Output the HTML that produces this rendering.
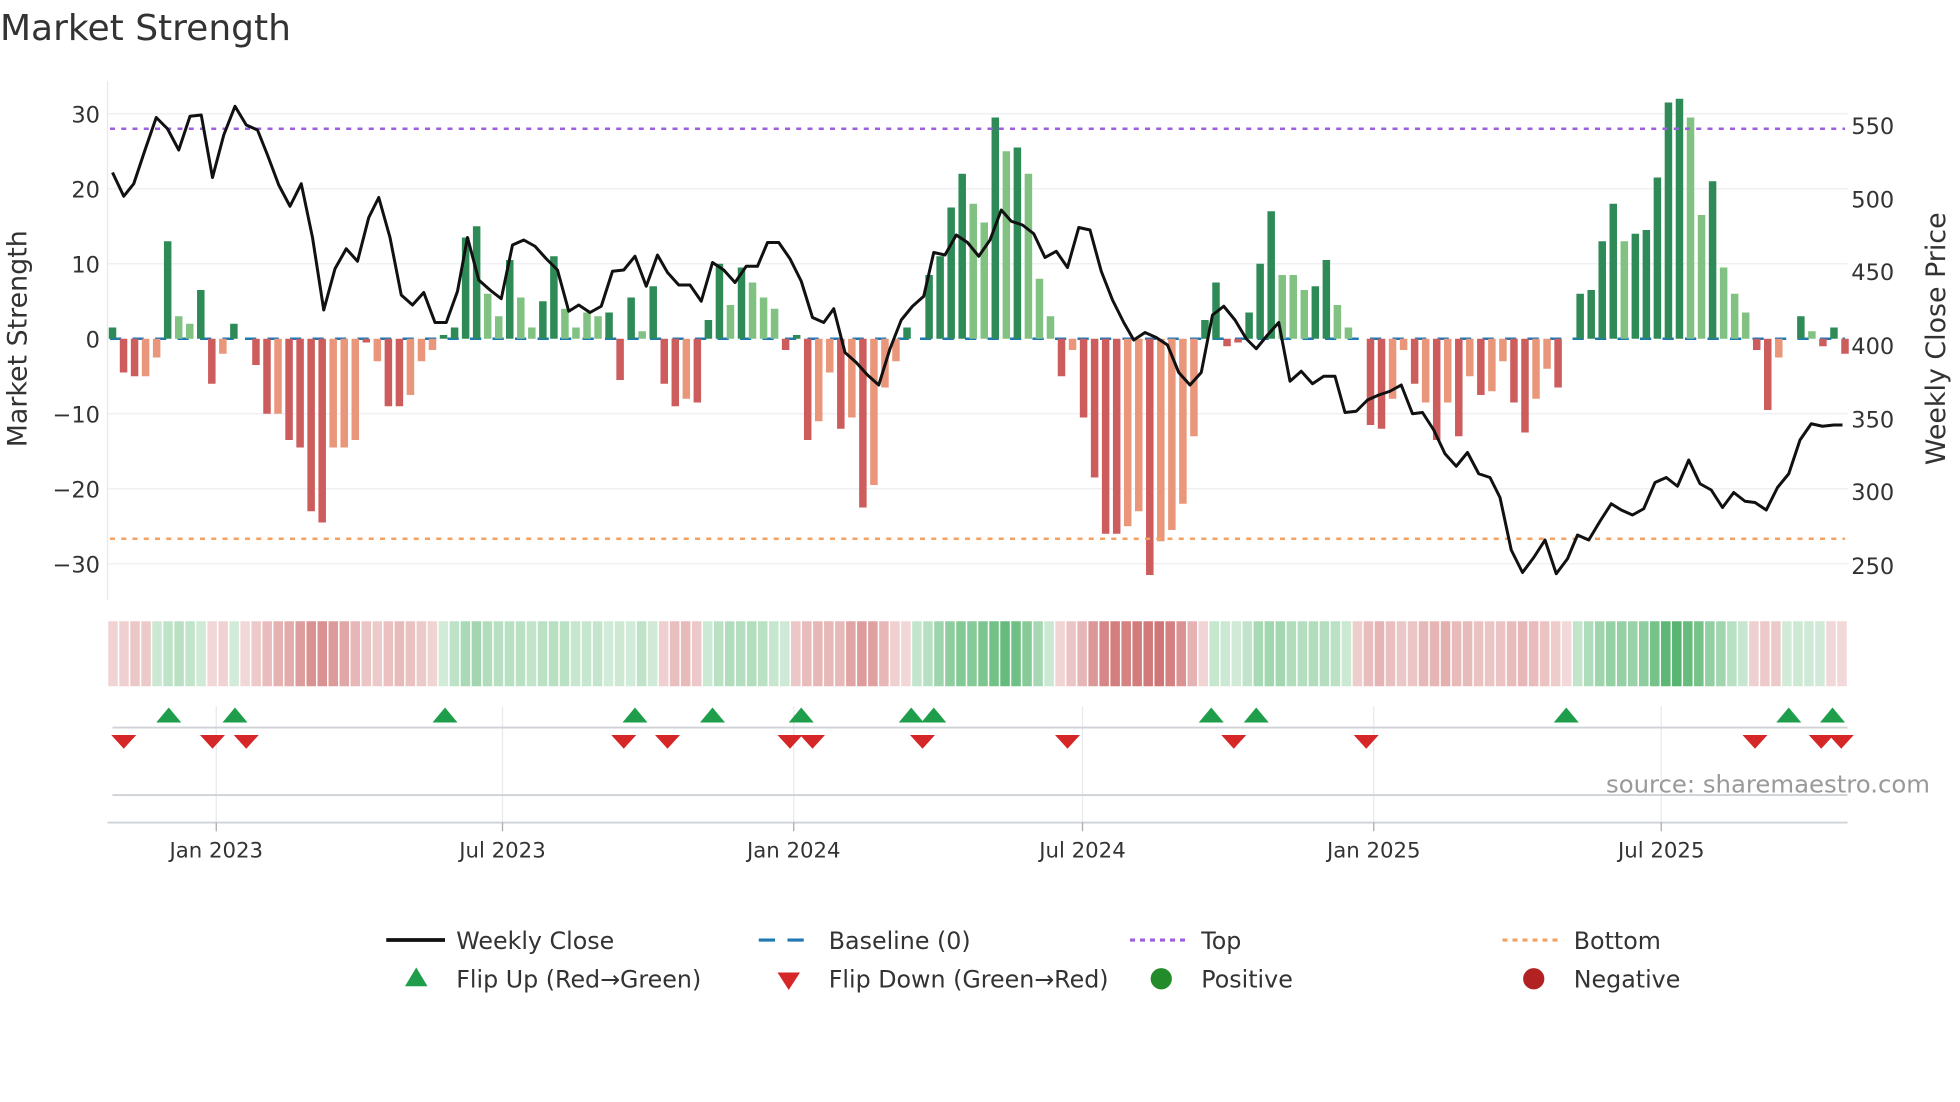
<!DOCTYPE html>
<html><head><meta charset="utf-8"><style>
html,body{margin:0;padding:0;background:#fff;width:1960px;height:1102px;overflow:hidden}
svg{display:block}
text{font-family:"DejaVu Sans","Liberation Sans",sans-serif;fill:#333}
</style></head><body>
<svg id="s" width="1960" height="1102" viewBox="0 0 1568 881.6" xmlns="http://www.w3.org/2000/svg">
<text x="0" y="32" font-size="28.8">Market Strength</text>
<g stroke="#eef0f3" stroke-width="1.2">
<line x1="86" x2="1478" y1="91" y2="91"/><line x1="86" x2="1478" y1="151" y2="151"/><line x1="86" x2="1478" y1="211" y2="211"/>
<line x1="86" x2="1478" y1="331" y2="331"/><line x1="86" x2="1478" y1="391" y2="391"/><line x1="86" x2="1478" y1="451" y2="451"/>
</g>
<line x1="86" x2="86" y1="65" y2="480" stroke="#e6e8ec"/>
<g font-size="18" text-anchor="end">
<text x="80" y="98">30</text><text x="80" y="158">20</text><text x="80" y="218">10</text><text x="80" y="278">0</text>
<text x="80" y="338">−10</text><text x="80" y="398">−20</text><text x="80" y="458">−30</text></g>
<g font-size="18">
<text x="1481" y="107">550</text><text x="1481" y="166">500</text><text x="1481" y="224">450</text><text x="1481" y="283">400</text>
<text x="1481" y="342">350</text><text x="1481" y="400">300</text><text x="1481" y="459">250</text></g>
<text font-size="21.5" transform="translate(21,271) rotate(-90)" text-anchor="middle">Market Strength</text>
<text font-size="21.5" transform="translate(1556,271) rotate(-90)" text-anchor="middle">Weekly Close Price</text>
<line x1="88" x2="1476" y1="271" y2="271" stroke="#1f77b4" stroke-width="2" stroke-dasharray="9,9"/>
<g id="bars"></g>
<line x1="88" x2="1476" y1="103" y2="103" stroke="#9b5fe0" stroke-width="2" stroke-dasharray="4,5"/>
<line x1="88" x2="1476" y1="431" y2="431" stroke="#f4a261" stroke-width="2" stroke-dasharray="4,5"/>
<polyline id="price" fill="none" stroke="#111" stroke-width="2.4" stroke-linejoin="round"/>
<g id="heat"></g>
<g stroke="#e8eaee" stroke-width="1">
<line x1="173" x2="173" y1="565" y2="660"/><line x1="402" x2="402" y1="565" y2="660"/><line x1="635" x2="635" y1="565" y2="660"/>
<line x1="866" x2="866" y1="565" y2="660"/><line x1="1099" x2="1099" y1="565" y2="660"/><line x1="1329" x2="1329" y1="565" y2="660"/></g>
<line x1="90" x2="1478" y1="582" y2="582" stroke="#cfd2d6" stroke-width="1.5"/>
<line x1="90" x2="1478" y1="636" y2="636" stroke="#cfd2d6" stroke-width="1.5"/>
<line x1="86" x2="1478" y1="658" y2="658" stroke="#cfd2d6" stroke-width="1.5"/>
<g stroke="#aaa"><line x1="173" x2="173" y1="658" y2="665"/><line x1="402" x2="402" y1="658" y2="665"/><line x1="635" x2="635" y1="658" y2="665"/><line x1="866" x2="866" y1="658" y2="665"/><line x1="1099" x2="1099" y1="658" y2="665"/><line x1="1329" x2="1329" y1="658" y2="665"/></g>
<g id="marks"></g>
<text x="1544" y="634" font-size="19.5" text-anchor="end" style="fill:#999">source: sharemaestro.com</text>
<g font-size="17" text-anchor="middle">
<text x="173" y="686">Jan 2023</text><text x="402" y="686">Jul 2023</text><text x="635" y="686">Jan 2024</text>
<text x="866" y="686">Jul 2024</text><text x="1099" y="686">Jan 2025</text><text x="1329" y="686">Jul 2025</text></g>
<g font-size="19">
<line x1="309" x2="356" y1="752" y2="752" stroke="#111" stroke-width="3"/><text x="365" y="759">Weekly Close</text>
<line x1="607" x2="652" y1="752" y2="752" stroke="#1f77b4" stroke-width="2.5" stroke-dasharray="13,10"/><text x="663" y="759">Baseline (0)</text>
<line x1="904" x2="950" y1="752" y2="752" stroke="#9b5fe0" stroke-width="2.5" stroke-dasharray="4,4"/><text x="961" y="759">Top</text>
<line x1="1202" x2="1248" y1="752" y2="752" stroke="#f4a261" stroke-width="2.5" stroke-dasharray="4,4"/><text x="1259" y="759">Bottom</text>
<polygon points="324,789 342,789 333,774" fill="#1e9e4a"/><text x="365" y="790">Flip Up (Red→Green)</text>
<polygon points="622,778 640,778 631,792" fill="#d62728"/><text x="663" y="790">Flip Down (Green→Red)</text>
<circle cx="929" cy="783" r="8.5" fill="#238b2a"/><text x="961" y="790">Positive</text>
<circle cx="1227" cy="783" r="8.5" fill="#b22222"/><text x="1259" y="790">Negative</text>
</g>
</svg>
<script>
var NS="http://www.w3.org/2000/svg";
function el(p,n,a){var e=document.createElementNS(NS,n);for(var k in a)e.setAttribute(k,a[k]);p.appendChild(e);return e;}
var B="1.5d -4.5d -5d -5l -2.5l 13d 3l 2l 6.5d -6d -2l 2d 0d -3.5d -10d -10l -13.5d -14.5d -23d -24.5d -14.5l -14.5l -13.5l -0.5d -3l -9d -9d -7.5l -3l -1.5l 0.5d 1.5d 13.5d 15d 6l 3l 10.5d 5.5l 1.5l 5d 11d 4l 1.5l 3.5l 3l 3.5d -5.5d 5.5d 1l 7d -6d -9d -8l -8.5d 2.5d 10d 4.5l 9.5d 7.5l 5.5l 4l -1.5d 0.5d -13.5d -11l -4.5l -12d -10.5l -22.5d -19.5l -6.5l -3l 1.5d 0d 8.5d 11d 17.5d 22d 18l 15.5l 29.5d 25l 25.5d 22l 8l 3l -5d -1.5l -10.5d -18.5d -26d -26d -25l -23l -31.5d -27l -25.5l -22l -13l 2.5d 7.5d -1d -0.5d 3.5d 10d 17d 8.5l 8.5l 6.5l 7d 10.5d 4.5l 1.5l 0d -11.5d -12d -8l -1.5l -6d -8.5l -13.5d -8.5l -13d -5l -7.5d -7l -3l -8.5d -12.5d -8l -4l -6.5d 0d 6d 6.5d 13d 18d 13l 14d 14.5d 21.5d 31.5d 32d 29.5l 16.5l 21d 9.5l 6l 3.5l -1.5d -9.5d -2.5l 0d 3d 1l -1d 1.5d -2d".split(" ");
var n=B.length,step=(1476-90)/(n-1),g=document.getElementById("bars"),h=document.getElementById("heat");
var vals=[];
B.forEach(function(s,i){var v=parseFloat(s),t=s.slice(-1),x=90+i*step;vals.push(v);
 if(v!==0){var c=v>0?(t=="d"?"#2e8b57":"#81c283"):(t=="d"?"#cd5c5c":"#e9967a");
 var y=v>0?271-v*6:271;el(g,"rect",{x:x-3,y:y,width:6,height:Math.abs(v)*6,fill:c});}});
for(var i=0;i<n;i++){var s=0,c=0;for(var j=Math.max(0,i-1);j<=Math.min(n-1,i+1);j++){s+=vals[j];c++;}var v=s/c;
 var a=0.22+0.6*Math.min(Math.abs(v)/30,1);var col=v>=0?"rgba(50,165,80,"+a+")":"rgba(196,80,80,"+a+")";
 el(h,"rect",{x:86+i*(1392/n)+0.6,y:497,width:1392/n-1.2,height:52,fill:col});}
var P=[[90,138],[99,157],[107,147],[116,120],[125,94],[134,103],[143,120],[152,93],[161,92],[170,142],[179,108],[188,85],[197,100],[206,104],[214,124],[223,148],[232,165],[241,147],[250,190],[259,248],[268,215],[277,199],[286,209],[295,174],[303,158],[312,190],[321,236],[330,244],[339,234],[348,258],[357,258],[366,233],[374,190],[383,224],[392,232],[401,239],[410,196],[419,192],[428,197],[437,207],[446,216],[455,249],[463,244],[472,250],[481,245],[490,217],[499,216],[508,205],[517,229],[526,204],[534,218],[543,228],[552,228],[561,241],[570,210],[579,216],[588,226],[597,213],[606,213],[614,194],[623,194],[632,207],[641,225],[650,254],[659,258],[667,247],[676,282],[685,290],[694,300],[703,308],[712,279],[721,256],[730,245],[739,237],[747,202],[756,204],[765,188],[774,194],[783,205],[792,192],[801,168],[809,177],[818,180],[827,187],[836,206],[845,201],[854,214],[863,182],[872,184],[881,217],[890,240],[899,258],[907,272],[916,266],[925,270],[934,276],[943,298],[952,308],[961,298],[970,252],[979,245],[988,256],[997,271],[1005,279],[1014,268],[1023,258],[1032,305],[1041,297],[1050,307],[1059,301],[1068,301],[1076,330],[1085,329],[1094,320],[1103,316],[1112,313],[1121,308],[1130,331],[1138,330],[1147,344],[1156,363],[1165,373],[1174,362],[1183,379],[1192,382],[1200,398],[1209,440],[1218,458],[1227,446],[1236,432],[1245,459],[1254,447],[1262,428],[1271,432],[1280,417],[1289,403],[1297,408],[1306,412],[1315,407],[1324,386],[1333,382],[1342,389],[1351,368],[1360,387],[1369,392],[1378,406],[1387,394],[1396,401],[1404,402],[1413,408],[1422,390],[1431,379],[1440,352],[1449,339],[1458,341],[1467,340],[1474,340]];
document.getElementById("price").setAttribute("points",P.map(function(p){return p.join(",")}).join(" "));
var m=document.getElementById("marks");
[135,188,356,508,570,641,729,747,969,1005,1253,1431,1466].forEach(function(x){el(m,"polygon",{points:(x-10)+",578 "+(x+10)+",578 "+x+",566",fill:"#1e9e4a"});});
[99,170,197,499,534,632,650,738,854,987,1093,1404,1457,1473].forEach(function(x){el(m,"polygon",{points:(x-10)+",588 "+(x+10)+",588 "+x+",599",fill:"#d62728"});});
</script>
</body></html>
